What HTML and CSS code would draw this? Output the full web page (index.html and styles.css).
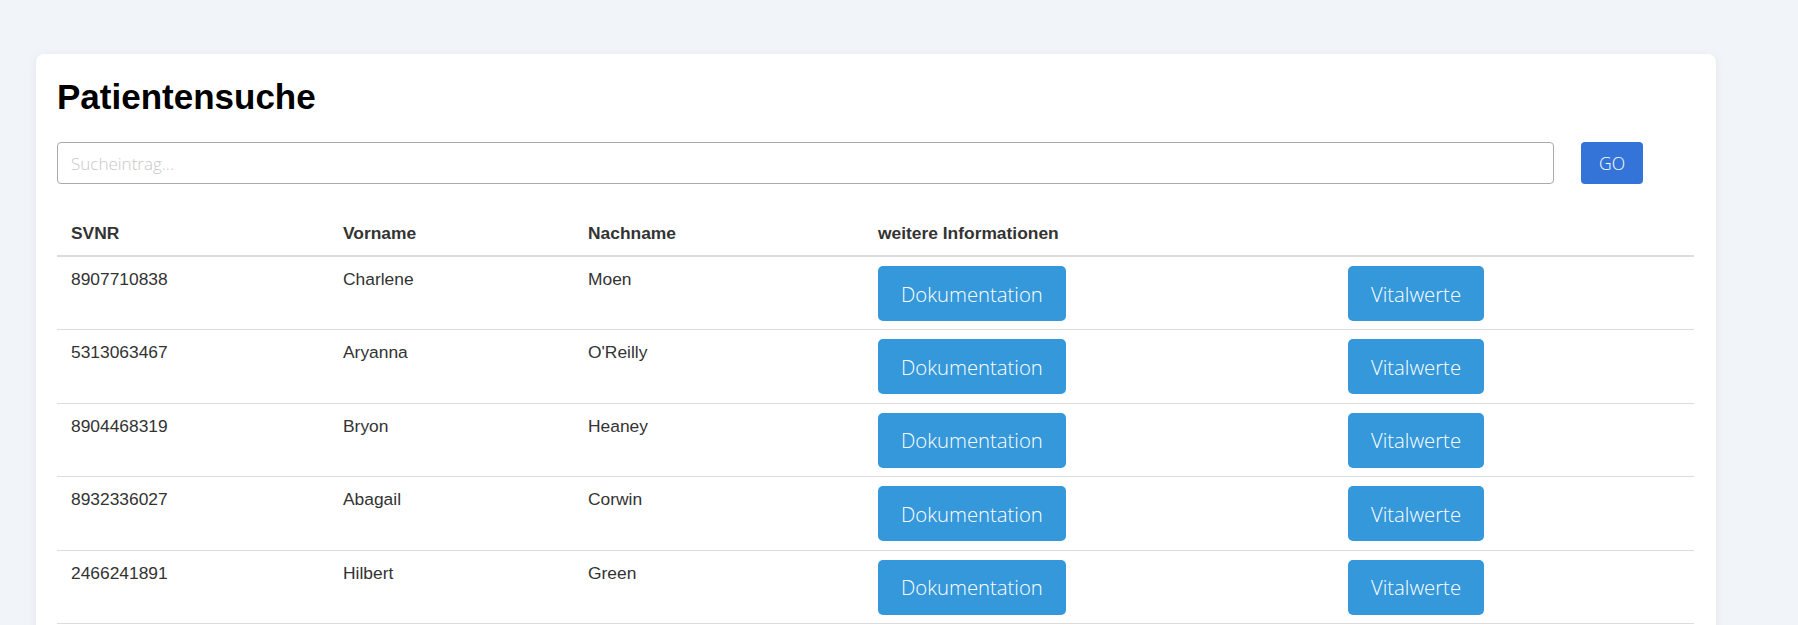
FILE: index.html
```html
<!DOCTYPE html>
<html lang="de">
<head>
<meta charset="utf-8">
<title>Patientensuche</title>
<link rel="stylesheet" href="styles.css">
</head>
<body>
<div class="card">
  <h1 class="title">Patientensuche</h1>
  <div class="search">
    <input class="search-input" type="text" placeholder="Sucheintrag...">
    <button class="go-btn">GO</button>
  </div>
  <table class="patients">
    <colgroup>
      <col class="c1"><col class="c2"><col class="c3"><col class="c4"><col class="c5">
    </colgroup>
    <thead>
      <tr><th>SVNR</th><th>Vorname</th><th>Nachname</th><th>weitere Informationen</th><th></th></tr>
    </thead>
    <tbody>
      <tr><td>8907710838</td><td>Charlene</td><td>Moen</td><td class="btn-cell"><button class="info-btn">Dokumentation</button></td><td class="btn-cell"><button class="info-btn">Vitalwerte</button></td></tr>
      <tr><td>5313063467</td><td>Aryanna</td><td>O'Reilly</td><td class="btn-cell"><button class="info-btn">Dokumentation</button></td><td class="btn-cell"><button class="info-btn">Vitalwerte</button></td></tr>
      <tr><td>8904468319</td><td>Bryon</td><td>Heaney</td><td class="btn-cell"><button class="info-btn">Dokumentation</button></td><td class="btn-cell"><button class="info-btn">Vitalwerte</button></td></tr>
      <tr><td>8932336027</td><td>Abagail</td><td>Corwin</td><td class="btn-cell"><button class="info-btn">Dokumentation</button></td><td class="btn-cell"><button class="info-btn">Vitalwerte</button></td></tr>
      <tr><td>2466241891</td><td>Hilbert</td><td>Green</td><td class="btn-cell"><button class="info-btn">Dokumentation</button></td><td class="btn-cell"><button class="info-btn">Vitalwerte</button></td></tr>
    </tbody>
  </table>
</div>
</body>
</html>
```

FILE: styles.css
```css
html, body {
  margin: 0;
  padding: 0;
}
body {
  background: #f1f4f8;
  font-family: "Liberation Sans", Arial, sans-serif;
  color: #333;
  overflow: hidden;
}
.card {
  margin: 54px 0 0 36px;
  width: 1680px;
  box-sizing: border-box;
  padding: 23px 22px 40px 21px;
  background: #fff;
  border-radius: 8px;
  box-shadow: 0 2px 10px rgba(30, 50, 90, 0.07);
}
.title {
  margin: 0;
  font-size: 35px;
  line-height: 40px;
  font-weight: bold;
  color: #000;
}
.search {
  display: flex;
  align-items: center;
  gap: 27px;
  margin-top: 25px;
}
.search-input {
  width: 1497px;
  height: 42px;
  box-sizing: border-box;
  border: 1px solid #aaa;
  border-radius: 4px;
  padding: 0 13px;
  font-family: "Open Sans", sans-serif;
  font-weight: 300;
  font-size: 17px;
  color: #333;
  outline: none;
}
.search-input::placeholder {
  color: #c8c8c8;
}
.go-btn {
  width: 62px;
  height: 42px;
  border: none;
  border-radius: 4px;
  background: #3474d9;
  color: #fff;
  font-family: "Open Sans", sans-serif;
  font-weight: 300;
  font-size: 17.5px;
  padding: 0;
}
.patients {
  margin-top: 27px;
  width: 1637px;
  border-collapse: collapse;
  table-layout: fixed;
  font-size: 17.4px;
}
.c1 { width: 272px; }
.c2 { width: 245px; }
.c3 { width: 290px; }
.c4 { width: 470px; }
.c5 { width: 360px; }
.patients th {
  text-align: left;
  font-weight: bold;
  padding: 12px 14px 12px 14px;
  border-bottom: 2px solid #dcdcdc;
  line-height: 20px;
}
.patients td {
  vertical-align: top;
  padding: 12px 14px 8px 14px;
  border-bottom: 1px solid #dddddd;
  line-height: 20px;
}
.patients td.btn-cell {
  padding-top: 9px;
  padding-bottom: 8.4px;
}
.info-btn {
  display: block;
  height: 55px;
  border: none;
  border-radius: 5px;
  background: #3498db;
  color: #fff;
  font-family: "Open Sans", sans-serif;
  font-weight: 300;
  font-size: 20.3px;
  padding: 0 23px;
}
```
